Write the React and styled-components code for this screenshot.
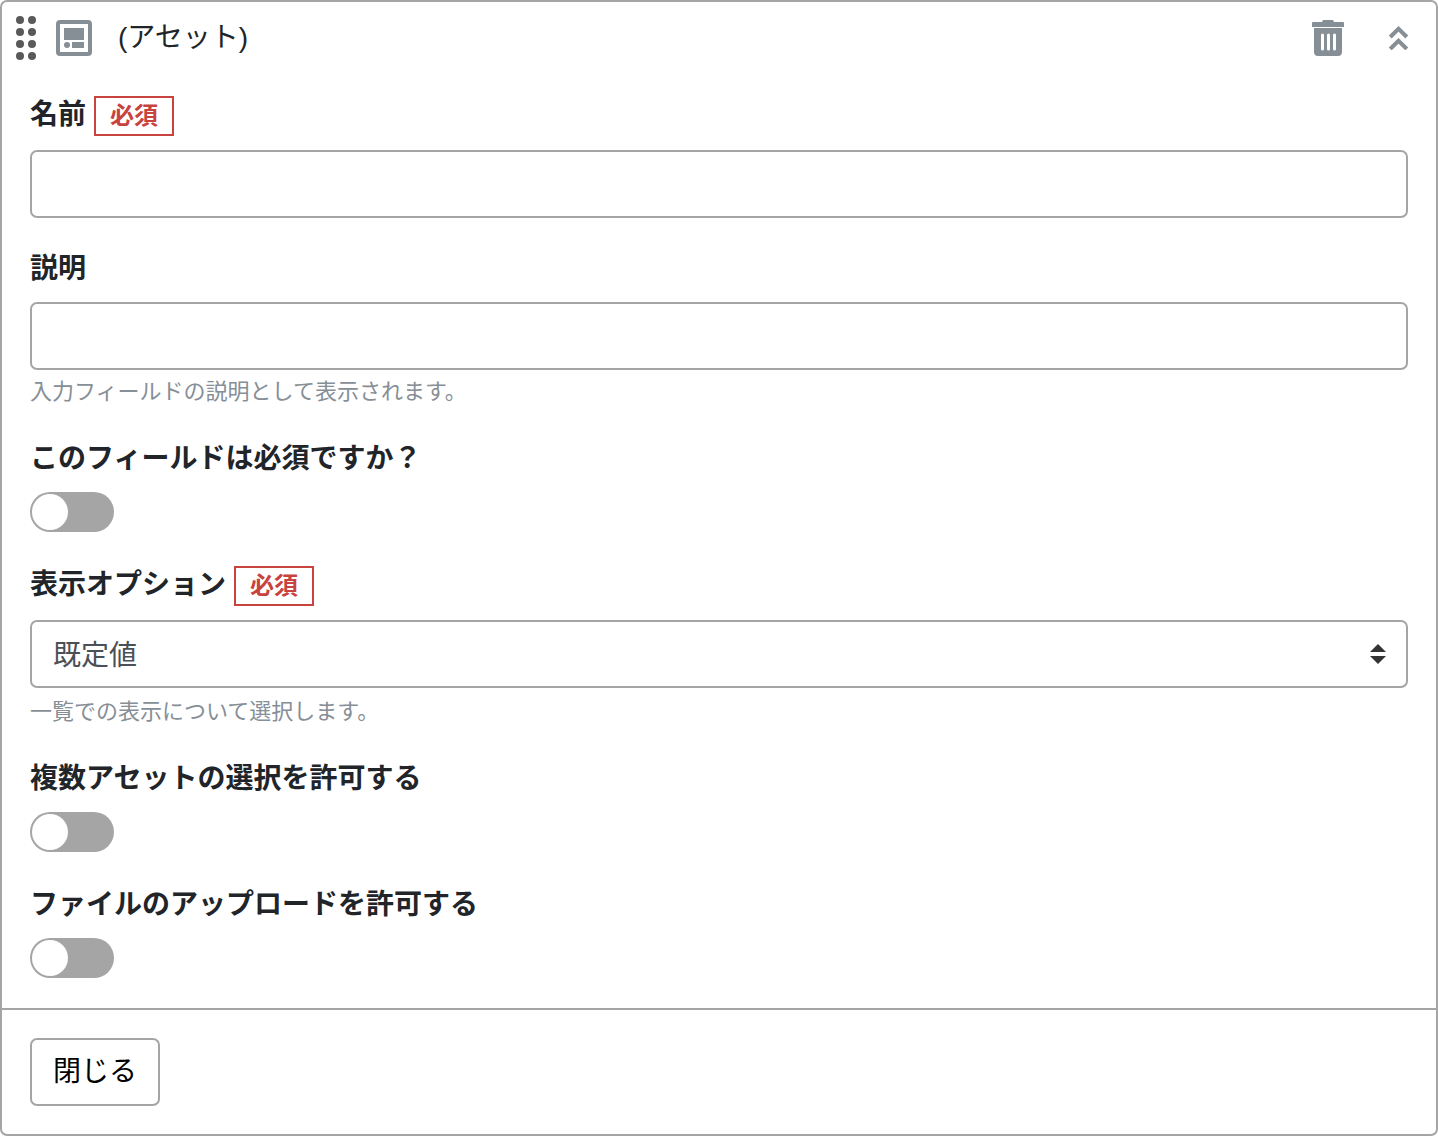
import { useState } from 'react';
import styled, { createGlobalStyle } from 'styled-components';


const TrashIcon = () => (
    <svg width="32" height="36" viewBox="0 0 32 36" fill="currentColor" aria-hidden="true">
        <path d="M11 0h10l1 2h9a1 1 0 0 1 1 1v4H0V3a1 1 0 0 1 1-1h9z"/>
        <path
            fillRule="evenodd"
            d="M2 8h28v24a4 4 0 0 1-4 4H6a4 4 0 0 1-4-4zM9 15v14a1 1 0 0 0 3 0V15a1 1 0 0 0-3 0zM15 15v14a1 1 0 0 0 3 0V15a1 1 0 0 0-3 0zM21 15v14a1 1 0 0 0 3 0V15a1 1 0 0 0-3 0z"
        />
    </svg>
)

const CollapseIcon = () => (
    <svg width="20" height="24" viewBox="0 0 20 24" fill="none" stroke="currentColor" strokeWidth="4" aria-hidden="true">
        <path d="M2.2 11 10.5 2.8l8.3 8.2M2.2 23 10.5 14.8l8.3 8.2"/>
    </svg>
)

const AssetIcon = () => (
    <svg width="36" height="36" viewBox="0 0 36 36" fill="#868e96" aria-hidden="true">
        <rect x="2" y="2" width="32" height="32" rx="2" fill="none" stroke="#868e96" strokeWidth="4"/>
        <rect x="8" y="8" width="20" height="12"/>
        <circle cx="11" cy="25" r="3"/>
        <rect x="16" y="22" width="12" height="6"/>
    </svg>
)

const DragIcon = () => (
    <svg width="20" height="44" viewBox="0 0 20 44" fill="#595959" aria-hidden="true">
        {[4, 16, 28, 40].map(y => (
            <g key={y}>
                <circle cx="4" cy={y} r="4"/>
                <circle cx="16" cy={y} r="4"/>
            </g>
        ))}
    </svg>
)

const Field = ({id,label,required,children}) => (
    <FieldGroup>
        <LabelRow $required={required}>
            <Label htmlFor={id}>{label}</Label>
            {required && <Badge>必須</Badge>}
        </LabelRow>
        {children}
    </FieldGroup>
)

const App = () => {

    const [name,setName] = useState('');
    const [description,setDescription] = useState('');

    return (
        <>
            <GlobalStyle/>
            <Panel>
                <Header>
                    <DragIcon/>
                    <TypeIcon><AssetIcon/></TypeIcon>
                    <Title>(アセット)</Title>
                    <Actions>
                        <IconButton type="button" aria-label="削除"><TrashIcon/></IconButton>
                        <IconButton type="button" aria-label="折りたたむ"><CollapseIcon/></IconButton>
                    </Actions>
                </Header>

                <Body>
                    <Field id="name" label="名前" required>
                        <TextInput id="name" type="text" value={name} onChange={e => setName(e.target.value)}/>
                    </Field>
                    <Field id="description" label="説明">
                        <TextInput id="description" type="text" value={description} onChange={e => setDescription(e.target.value)}/>
                        <Help $gap={6}>入力フィールドの説明として表示されます。</Help>
                    </Field>
                    <Field id="required" label="このフィールドは必須ですか？">
                        <Toggle id="required" type="checkbox"/>
                    </Field>
                    <Field id="display" label="表示オプション" required>
                        <SelectWrap>
                            <Select id="display">
                                <option>既定値</option>
                            </Select>
                            <SelectArrow width="16" height="20" viewBox="0 0 16 20" aria-hidden="true">
                                <path d="M8 0l8 8H0zM0 12h16l-8 8z"/>
                            </SelectArrow>
                        </SelectWrap>
                        <Help $gap={8}>一覧での表示について選択します。</Help>
                    </Field>
                    <Field id="multiple" label="複数アセットの選択を許可する">
                        <Toggle id="multiple" type="checkbox"/>
                    </Field>
                    <Field id="upload" label="ファイルのアップロードを許可する">
                        <Toggle id="upload" type="checkbox"/>
                    </Field>
                </Body>

                <Footer>
                    <CloseButton type="button">閉じる</CloseButton>
                </Footer>
            </Panel>
        </>
    )
};

export default App;

const GlobalStyle = createGlobalStyle`
    *, *::before, *::after {
        box-sizing: border-box;
    }

    body {
        margin: 0;
        background: #fff;
        color: #212529;
        font-family: "Liberation Sans", "Noto Sans CJK JP", sans-serif;
        font-size: 28px;
        line-height: 42px;
    }

    button, input, select {
        font: inherit;
    }
`;

const Panel = styled.section`
    border: 2px solid #a5a5a5;
    border-radius: 7px;
`;

const Header = styled.header`
    display: flex;
    align-items: center;
    height: 72px;
    padding: 0 28px 0 14px;
`;

const TypeIcon = styled.span`
    display: flex;
    margin: 0 26px 0 20px;
`;

const Title = styled.span`
    flex: 1;
`;

const Actions = styled.div`
    display: flex;
    align-items: center;
    gap: 44px;
`;

const IconButton = styled.button`
    display: flex;
    padding: 0;
    border: 0;
    background: none;
    color: #868e96;
    cursor: pointer;
`;

const Body = styled.div`
    display: flex;
    flex-direction: column;
    gap: 30px;
    padding: 20px 28px 28px;
`;

const FieldGroup = styled.div``;

const LabelRow = styled.div`
    display: flex;
    gap: 8px;
    height: ${({$required}) => $required ? '42px' : '40px'};
    margin-bottom: 14px;
`;

const Label = styled.label`
    font-weight: 700;
`;

const Badge = styled.span`
    align-self: flex-end;
    padding: 0 14px;
    border: 2px solid #c8423e;
    color: #c8423e;
    font-size: 24px;
    font-weight: 700;
    line-height: 36px;
`;

const TextInput = styled.input`
    display: block;
    width: 100%;
    height: 68px;
    padding: 0 21px;
    border: 2px solid #a5a5a5;
    border-radius: 7px;
    background: #fff;
    color: #495057;
`;

const SelectWrap = styled.div`
    position: relative;
`;

const Select = styled(TextInput).attrs({ as: 'select' })`
    appearance: none;
    padding: 4px 60px 0 21px;
`;

const SelectArrow = styled.svg`
    position: absolute;
    top: 24px;
    right: 22px;
    fill: #333;
    pointer-events: none;
`;

const Help = styled.p`
    margin: ${({$gap}) => $gap}px 0 0;
    color: #868e96;
    font-size: 22px;
    line-height: 32px;
`;

const Toggle = styled.input`
    display: block;
    appearance: none;
    width: 84px;
    height: 40px;
    margin: 0 0 2px;
    padding: 2px;
    border-radius: 20px;
    background: #a5a5a5;
    cursor: pointer;

    &::before {
        content: '';
        display: block;
        width: 36px;
        height: 36px;
        border-radius: 50%;
        background: #fff;
    }

    &:checked {
        background: #28a745;
    }

    &:checked::before {
        margin-left: auto;
    }
`;

const Footer = styled.footer`
    padding: 28px;
    border-top: 2px solid #a5a5a5;
`;

const CloseButton = styled.button`
    display: block;
    height: 68px;
    padding: 0 21px;
    border: 2px solid #a5a5a5;
    border-radius: 7px;
    background: #fff;
    color: #000;
    cursor: pointer;
`;
